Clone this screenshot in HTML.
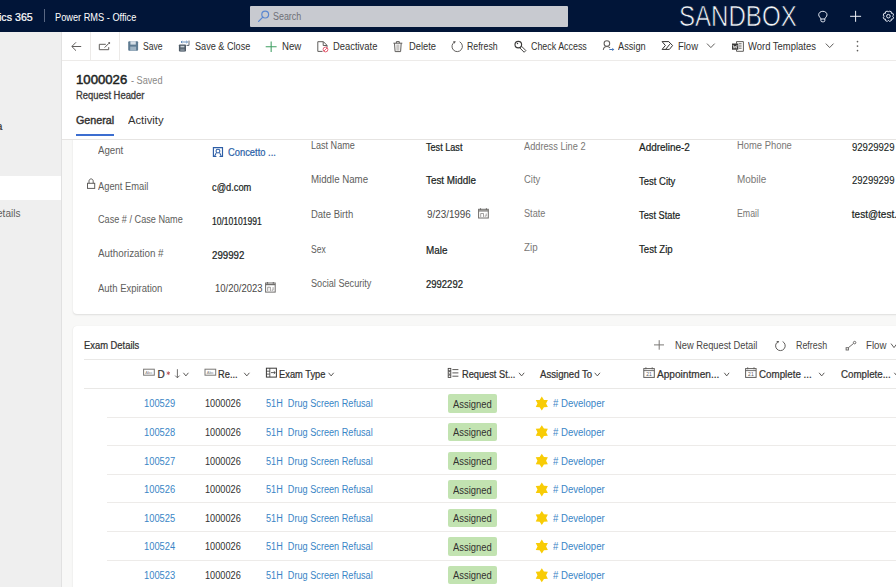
<!DOCTYPE html>
<html><head><meta charset="utf-8">
<style>
*{margin:0;padding:0;box-sizing:border-box}
html,body{width:896px;height:587px;overflow:hidden;background:#fff;font-family:"Liberation Sans",sans-serif;color:#323130}
.t{position:absolute;white-space:nowrap;line-height:normal}
.b{position:absolute}
svg.i{position:absolute;overflow:visible}
</style></head><body>
<!-- header -->
<div class="b" style="left:0;top:0;width:896px;height:32px;background:#011538"></div>
<div class="b" style="left:44px;top:9px;width:1px;height:13px;background:#5a6883"></div>
<div class="b" style="left:250px;top:6px;width:318px;height:21px;background:#c8cad0;border-radius:1px"></div>
<!-- sidebar -->
<div class="b" style="left:0;top:32px;width:61px;height:555px;background:#efefef"></div>
<div class="b" style="left:61px;top:32px;width:1px;height:555px;background:#e1e1e1"></div>
<div class="b" style="left:0;top:176px;width:61px;height:24px;background:#ffffff"></div>
<!-- page bg -->
<div class="b" style="left:62px;top:140px;width:834px;height:447px;background:#f8f8f7"></div>
<div class="b" style="left:73px;top:120px;width:840px;height:194px;background:#fff;border-radius:4px;box-shadow:0 0 1px rgba(0,0,0,.07),0 1px 2px rgba(0,0,0,.1)"></div>
<div class="b" style="left:73px;top:326px;width:840px;height:300px;background:#fff;border-radius:4px;box-shadow:0 0 1px rgba(0,0,0,.07),0 1px 2px rgba(0,0,0,.1)"></div>
<!-- command bar -->
<div class="b" style="left:62px;top:32px;width:834px;height:108px;background:#fff"></div>
<div class="b" style="left:90px;top:32px;width:1px;height:28px;background:#eceae8"></div>
<div class="b" style="left:119px;top:32px;width:1px;height:28px;background:#eceae8"></div>
<div class="b" style="left:62px;top:60px;width:834px;height:1px;background:#edebe9"></div>
<!-- tabs underline + border -->
<div class="b" style="left:76px;top:134px;width:38px;height:2px;background:#3c6ed0"></div>
<div class="b" style="left:62px;top:139px;width:834px;height:1px;background:#e6e4e2"></div>

<!-- grid lines -->
<div class="b" style="left:84px;top:359px;width:812px;height:1px;background:#e9e8e6"></div>
<div class="b" style="left:84px;top:388px;width:812px;height:1px;background:#e9e8e6"></div>
<div class="b" style="left:107px;top:416.6px;width:789px;height:1px;background:#edebe9"></div>
<div class="b" style="left:107px;top:445.2px;width:789px;height:1px;background:#edebe9"></div>
<div class="b" style="left:107px;top:473.8px;width:789px;height:1px;background:#edebe9"></div>
<div class="b" style="left:107px;top:502.4px;width:789px;height:1px;background:#edebe9"></div>
<div class="b" style="left:107px;top:531.0px;width:789px;height:1px;background:#edebe9"></div>
<div class="b" style="left:107px;top:559.6px;width:789px;height:1px;background:#edebe9"></div>
<div class="b" style="left:107px;top:588.2px;width:789px;height:1px;background:#edebe9"></div>

<div class="b" style="left:448px;top:394.3px;width:49px;height:18.5px;background:#c2e3b1;border-radius:2px"></div>
<div class="b" style="left:448px;top:422.9px;width:49px;height:18.5px;background:#c2e3b1;border-radius:2px"></div>
<div class="b" style="left:448px;top:451.5px;width:49px;height:18.5px;background:#c2e3b1;border-radius:2px"></div>
<div class="b" style="left:448px;top:480.1px;width:49px;height:18.5px;background:#c2e3b1;border-radius:2px"></div>
<div class="b" style="left:448px;top:508.7px;width:49px;height:18.5px;background:#c2e3b1;border-radius:2px"></div>
<div class="b" style="left:448px;top:537.3px;width:49px;height:18.5px;background:#c2e3b1;border-radius:2px"></div>
<div class="b" style="left:448px;top:565.9px;width:49px;height:18.5px;background:#c2e3b1;border-radius:2px"></div>

<svg class="i" style="left:0;top:0" width="896" height="587" viewBox="0 0 896 587">
<circle cx="265.2" cy="14.6" r="3.4" fill="none" stroke="#5a86d0" stroke-width="1.2"/>
<path d="M262.8 17.1 L258.6 21.4" stroke="#5a86d0" stroke-width="1.3" stroke-linecap="round"/>
<path d="M820.9 19.0 C820.9 17.8 818.7 16.8 818.7 14.8 C818.7 12.7 820.6 11.3 822.85 11.3 C825.1 11.3 827.0 12.7 827.0 14.8 C827.0 16.8 824.8 17.8 824.8 19.0 Z" fill="none" stroke="#e6ebf5" stroke-width="1"/>
<path d="M820.9 19.0 V20.6 C820.9 21.4 821.5 21.8 822.2 21.8 H823.5 C824.2 21.8 824.8 21.4 824.8 20.6 V19.0" fill="none" stroke="#e6ebf5" stroke-width="1"/>
<path d="M850.1 16.3 H861.1 M855.6 10.8 V21.8" stroke="#eef1f7" stroke-width="1"/>
<path d="M888.45 12.10 L889.41 11.00 L891.36 11.80 L891.26 13.26 L891.34 13.34 L892.80 13.24 L893.60 15.19 L892.50 16.15 L892.50 16.25 L893.60 17.21 L892.80 19.16 L891.34 19.06 L891.26 19.14 L891.36 20.60 L889.41 21.40 L888.45 20.30 L888.35 20.30 L887.39 21.40 L885.44 20.60 L885.54 19.14 L885.46 19.06 L884.00 19.16 L883.20 17.21 L884.30 16.25 L884.30 16.15 L883.20 15.19 L884.00 13.24 L885.46 13.34 L885.54 13.26 L885.44 11.80 L887.39 11.00 L888.35 12.10 Z" fill="none" stroke="#e6ebf5" stroke-width="1" stroke-linejoin="round"/>
<circle cx="888.4" cy="16.2" r="1.8" fill="none" stroke="#e6ebf5" stroke-width="1"/>
<path d="M81.2 46.5 H72 M76 42.3 L71.8 46.5 L76 50.7" fill="none" stroke="#605e5c" stroke-width="1"/>
<path d="M105.8 44.3 H99.3 V49.7 H108.7 V47.2 M104.6 47.6 L108.6 43.6" fill="none" stroke="#605e5c" stroke-width="1"/>
<circle cx="109.2" cy="43.0" r="1.0" fill="#605e5c"/>
<rect x="128.2" y="41.2" width="9.9" height="9.5" rx="1" fill="#5e7b92"/>
<rect x="130.4" y="41.2" width="5.4" height="3.4" fill="#d5dee6"/>
<rect x="130.2" y="46.6" width="5.9" height="4.1" fill="#9db2c2"/>
<rect x="178.9" y="44.5" width="7.1" height="7.1" rx="0.8" fill="#4e5a66"/>
<rect x="180.5" y="45.8" width="3.9" height="1.6" fill="#c9d1d8"/>
<rect x="180.3" y="48.6" width="4.3" height="3" fill="#7d8994"/>
<path d="M181 42 H187.5 M182.2 40.9 L181 42 L182.2 43.1 M186.3 40.9 L187.5 42 L186.3 43.1" fill="none" stroke="#5a86b8" stroke-width="0.9"/>
<path d="M189 40.6 V45.4 H186.5" fill="none" stroke="#4e5a66" stroke-width="0.9"/>
<path d="M265.7 46.8 H276.6 M271.15 41.6 V51.9" stroke="#3f9e62" stroke-width="1.05"/>
<path d="M322.5 51.4 H317.8 V41.7 H323.4 L327 45.3 V47.5" fill="none" stroke="#605e5c" stroke-width="1"/>
<path d="M323.2 41.7 V45.5 H327" fill="none" stroke="#605e5c" stroke-width="1"/>
<circle cx="325.5" cy="49.5" r="2.4" fill="#fff" stroke="#e0566a" stroke-width="0.95"/>
<path d="M323.9 51.1 L327.1 47.9" stroke="#e0566a" stroke-width="0.9"/>
<path d="M393.4 43.2 H402.3 M396.4 43.2 V41.6 H399.3 V43.2 M394.5 43.2 L395.1 51.6 H400.6 L401.2 43.2" fill="none" stroke="#605e5c" stroke-width="1"/>
<rect x="396.3" y="44.5" width="3.1" height="6.2" fill="#c8c6c4"/>
<path d="M459.64 41.81 A5.2 5.2 0 1 1 454.44 41.99" fill="none" stroke="#605e5c" stroke-width="1"/>
<path d="M455.80 41.14 L454.56 43.69 L452.97 41.14 Z" fill="#605e5c"/>
<circle cx="518.3" cy="44.6" r="3.3" fill="none" stroke="#3b3a39" stroke-width="1.15"/>
<circle cx="517.5" cy="43.5" r="0.75" fill="#3b3a39"/>
<path d="M519.75 47.85 L524.15 52.25 L525.85 50.55 L521.45 46.15" fill="none" stroke="#3b3a39" stroke-width="0.95" stroke-linejoin="round"/>
<circle cx="606.9" cy="43.5" r="2.8" fill="none" stroke="#605e5c" stroke-width="1.05"/>
<path d="M603.3 49.9 C603.5 47.6 605 46.5 606.9 46.5 C608.2 46.5 609.3 47.1 610 47.9" fill="none" stroke="#605e5c" stroke-width="1.05"/>
<path d="M609.4 49.5 H612.6" stroke="#3c6fb5" stroke-width="1"/>
<path d="M614.3 49.5 L612.2 48 V51 Z" fill="#3c6fb5"/>
<path d="M662.1 41.6 H668.6 L672.6 45.5 L669.4 49.4 H662.1 L665.4 45.5 Z" fill="none" stroke="#323130" stroke-width="1" stroke-linejoin="miter"/>
<path d="M665.6 49.4 L669.8 44.2 M668.6 41.6 L670.2 43.1" fill="none" stroke="#323130" stroke-width="1"/>
<path d="M707 43.6 L710.85 47.6 L714.7 43.6" fill="none" stroke="#605e5c" stroke-width="1"/>
<path d="M736.5 41.6 H743.4 V51.3 H736.5 V49.6 M736.5 43.7 V41.6 M738.8 43.8 H741.6 M738.8 46 H741.6 M738.8 48.2 H741.6" fill="none" stroke="#605e5c" stroke-width="1"/>
<rect x="732" y="43.5" width="6.3" height="6.2" fill="#3b3a39"/>
<path d="M733.1 45 L734 48.3 L735.1 46 L736.2 48.3 L737.1 45" fill="none" stroke="#fff" stroke-width="0.7"/>
<path d="M825.8 43.6 L829.65 47.6 L833.5 43.6" fill="none" stroke="#605e5c" stroke-width="1"/>
<circle cx="857.5" cy="41.6" r="0.85" fill="#605e5c"/>
<circle cx="857.5" cy="46.1" r="0.85" fill="#605e5c"/>
<circle cx="857.5" cy="50.6" r="0.85" fill="#605e5c"/>
<path d="M216.4 156.5 H213.4 V147.6 H222.5 V156.5 H219.5" fill="none" stroke="#2d5ea6" stroke-width="1.15"/>
<circle cx="217.95" cy="151.1" r="1.95" fill="none" stroke="#2d5ea6" stroke-width="1.05"/>
<path d="M214.6 156.3 L216.2 153.1 M221.3 156.3 L219.7 153.1" fill="none" stroke="#2d5ea6" stroke-width="1.05"/>
<path d="M89 183.2 V181.1 C89 179.8 90 178.9 91.1 178.9 C92.2 178.9 93.2 179.8 93.2 181.1 V183.2" fill="none" stroke="#605e5c" stroke-width="1"/>
<rect x="87.5" y="183.3" width="7.2" height="5.1" fill="none" stroke="#605e5c" stroke-width="1"/>
<rect x="265.6" y="283.0" width="9.599999999999966" height="9.100000000000023" fill="none" stroke="#6f6d6b" stroke-width="1"/>
<path d="M265.6 284.6 H275.2" stroke="#6f6d6b" stroke-width="1.2"/>
<path d="M267.5 282 V283.8 M273.3 282 V283.8" stroke="#6f6d6b" stroke-width="1.1"/>
<path d="M267.7 291.0 V287.2 H270.4 V291.0 M273.1 287.2 V290.20000000000005 H271.6" fill="none" stroke="#6f6d6b" stroke-width="0.8" opacity="0.8"/>
<rect x="478.6" y="209.3" width="9.699999999999989" height="8.699999999999989" fill="none" stroke="#6f6d6b" stroke-width="1"/>
<path d="M478.6 210.9 H488.3" stroke="#6f6d6b" stroke-width="1.2"/>
<path d="M480.5 208.3 V210.10000000000002 M486.4 208.3 V210.10000000000002" stroke="#6f6d6b" stroke-width="1.1"/>
<path d="M480.7 216.9 V213.5 H483.5 V216.9 M486.2 213.5 V216.1 H484.7" fill="none" stroke="#6f6d6b" stroke-width="0.8" opacity="0.8"/>
<path d="M654 344.9 H664 M659.2 340.2 V349.7" stroke="#7a7876" stroke-width="1"/>
<path d="M782.65 341.56 A4.8 4.8 0 1 1 777.86 341.73" fill="none" stroke="#605e5c" stroke-width="1"/>
<path d="M779.21 340.88 L777.97 343.43 L776.38 340.88 Z" fill="#605e5c"/>
<rect x="846.1" y="347.7" width="2.3" height="2.3" fill="none" stroke="#605e5c" stroke-width="0.9"/>
<path d="M848.4 347.7 L853.4 343.6" stroke="#605e5c" stroke-width="0.9"/>
<circle cx="854.6" cy="342.6" r="1.25" fill="none" stroke="#605e5c" stroke-width="0.9"/>
<path d="M891 343.6 L894.00 347.6 L897 343.6" fill="none" stroke="#605e5c" stroke-width="1"/>
<rect x="143.6" y="369.2" width="10.700000000000017" height="6.0" fill="none" stroke="#7a7876" stroke-width="1"/>
<text x="148.9" y="373.9" font-size="4.2" text-anchor="middle" fill="#8a8886" font-family="Liberation Sans">Abc</text>
<rect x="205.0" y="369.2" width="10.699999999999989" height="6.0" fill="none" stroke="#7a7876" stroke-width="1"/>
<text x="210.3" y="373.9" font-size="4.2" text-anchor="middle" fill="#8a8886" font-family="Liberation Sans">Abc</text>
<path d="M168.3 371.3 V375.1 M166.65 372.25 L169.95 374.15 M169.95 372.25 L166.65 374.15" stroke="#b0434a" stroke-width="0.75"/>
<path d="M177.4 369.2 V377.8 M175.2 375.6 L177.4 377.8 L179.6 375.6" fill="none" stroke="#605e5c" stroke-width="0.9"/>
<path d="M183.4 372.8 L185.90 375.9 L188.4 372.8" fill="none" stroke="#484644" stroke-width="0.9"/>
<path d="M244.2 372.8 L246.80 375.9 L249.4 372.8" fill="none" stroke="#484644" stroke-width="0.9"/>
<path d="M328.6 372.8 L331.15 375.9 L333.7 372.8" fill="none" stroke="#484644" stroke-width="0.9"/>
<path d="M519 372.8 L521.60 375.9 L524.2 372.8" fill="none" stroke="#484644" stroke-width="0.9"/>
<path d="M594.7 372.8 L597.35 375.9 L600 372.8" fill="none" stroke="#484644" stroke-width="0.9"/>
<path d="M724.3 372.8 L726.70 375.9 L729.1 372.8" fill="none" stroke="#484644" stroke-width="0.9"/>
<path d="M819.1 372.8 L821.70 375.9 L824.3 372.8" fill="none" stroke="#484644" stroke-width="0.9"/>
<path d="M894.3 372.8 L896.90 375.9 L899.5 372.8" fill="none" stroke="#484644" stroke-width="0.9"/>
<rect x="266.4" y="368.2" width="10" height="8.9" fill="none" stroke="#3b3a39" stroke-width="1"/>
<path d="M269.8 368.2 V377.1 M266.4 371.2 H269.8 M266.4 374.1 H269.8 M271 372.6 H275.2 M273.8 371.3 L275.3 372.6 L273.8 373.9" fill="none" stroke="#3b3a39" stroke-width="0.8"/>
<rect x="448.2" y="368.4" width="2.6" height="2.4" fill="none" stroke="#484644" stroke-width="0.9"/>
<path d="M452.4 369.6 H458.4" stroke="#484644" stroke-width="0.9"/>
<rect x="448.2" y="371.7" width="2.6" height="2.4" fill="none" stroke="#484644" stroke-width="0.9"/>
<path d="M452.4 372.9 H458.4" stroke="#484644" stroke-width="0.9"/>
<rect x="448.2" y="375.0" width="2.6" height="2.4" fill="none" stroke="#484644" stroke-width="0.9"/>
<path d="M452.4 376.2 H458.4" stroke="#484644" stroke-width="0.9"/>
<rect x="643.8" y="368.6" width="10.5" height="8.799999999999965" fill="none" stroke="#605e5c" stroke-width="1"/>
<path d="M643.8 370.6 H654.3" stroke="#605e5c" stroke-width="0.9"/>
<path d="M645.9 367.3 V369.3 M652.2 367.3 V369.3" stroke="#605e5c" stroke-width="0.9"/>
<text x="649.0" y="376.3" font-size="5" text-anchor="middle" fill="#605e5c" font-family="Liberation Sans">21</text>
<rect x="745.6" y="368.6" width="10.5" height="8.799999999999965" fill="none" stroke="#605e5c" stroke-width="1"/>
<path d="M745.6 370.6 H756.1" stroke="#605e5c" stroke-width="0.9"/>
<path d="M747.7 367.3 V369.3 M754.0 367.3 V369.3" stroke="#605e5c" stroke-width="0.9"/>
<text x="750.9" y="376.3" font-size="5" text-anchor="middle" fill="#605e5c" font-family="Liberation Sans">21</text>
<path d="M541.80 396.60 L543.95 399.88 L547.86 400.10 L546.10 403.60 L547.86 407.10 L543.95 407.32 L541.80 410.60 L539.65 407.32 L535.74 407.10 L537.50 403.60 L535.74 400.10 L539.65 399.88 Z" fill="#f8cc06"/>
<path d="M541.80 425.20 L543.95 428.48 L547.86 428.70 L546.10 432.20 L547.86 435.70 L543.95 435.92 L541.80 439.20 L539.65 435.92 L535.74 435.70 L537.50 432.20 L535.74 428.70 L539.65 428.48 Z" fill="#f8cc06"/>
<path d="M541.80 453.80 L543.95 457.08 L547.86 457.30 L546.10 460.80 L547.86 464.30 L543.95 464.52 L541.80 467.80 L539.65 464.52 L535.74 464.30 L537.50 460.80 L535.74 457.30 L539.65 457.08 Z" fill="#f8cc06"/>
<path d="M541.80 482.40 L543.95 485.68 L547.86 485.90 L546.10 489.40 L547.86 492.90 L543.95 493.12 L541.80 496.40 L539.65 493.12 L535.74 492.90 L537.50 489.40 L535.74 485.90 L539.65 485.68 Z" fill="#f8cc06"/>
<path d="M541.80 511.00 L543.95 514.28 L547.86 514.50 L546.10 518.00 L547.86 521.50 L543.95 521.72 L541.80 525.00 L539.65 521.72 L535.74 521.50 L537.50 518.00 L535.74 514.50 L539.65 514.28 Z" fill="#f8cc06"/>
<path d="M541.80 539.60 L543.95 542.88 L547.86 543.10 L546.10 546.60 L547.86 550.10 L543.95 550.32 L541.80 553.60 L539.65 550.32 L535.74 550.10 L537.50 546.60 L535.74 543.10 L539.65 542.88 Z" fill="#f8cc06"/>
<path d="M541.80 568.20 L543.95 571.48 L547.86 571.70 L546.10 575.20 L547.86 578.70 L543.95 578.92 L541.80 582.20 L539.65 578.92 L535.74 578.70 L537.50 575.20 L535.74 571.70 L539.65 571.48 Z" fill="#f8cc06"/>
</svg>

<div class="t" style="left:-0.73px;top:11.20px;font-size:10.67px;font-weight:normal;color:#ffffff;transform:scaleX(0.9994);transform-origin:0 0;-webkit-text-stroke:0.22px #ffffff;">ics 365</div>
<div class="t" style="left:55.37px;top:11.10px;font-size:10.67px;font-weight:normal;color:#ffffff;transform:scaleX(0.8657);transform-origin:0 0;">Power RMS - Office</div>
<div class="t" style="left:273.20px;top:11.00px;font-size:10px;font-weight:normal;color:#6e7077;transform:scaleX(0.8907);transform-origin:0 0;">Search</div>
<div class="t" style="left:678.84px;top:0.20px;font-size:29px;font-weight:normal;color:#f4f6fa;transform:scaleX(0.8298);transform-origin:0 0;-webkit-text-stroke:0.7px #011538;">SANDBOX</div>
<div class="t" style="left:143.30px;top:40.70px;font-size:10px;font-weight:normal;color:#323130;transform:scaleX(0.8599);transform-origin:0 0;">Save</div>
<div class="t" style="left:194.60px;top:40.70px;font-size:10px;font-weight:normal;color:#323130;transform:scaleX(0.9133);transform-origin:0 0;">Save &amp; Close</div>
<div class="t" style="left:281.80px;top:40.70px;font-size:10px;font-weight:normal;color:#323130;transform:scaleX(0.9630);transform-origin:0 0;">New</div>
<div class="t" style="left:332.60px;top:40.70px;font-size:10px;font-weight:normal;color:#323130;transform:scaleX(0.9388);transform-origin:0 0;">Deactivate</div>
<div class="t" style="left:408.60px;top:40.70px;font-size:10px;font-weight:normal;color:#323130;transform:scaleX(0.9360);transform-origin:0 0;">Delete</div>
<div class="t" style="left:467.40px;top:40.70px;font-size:10px;font-weight:normal;color:#323130;transform:scaleX(0.8742);transform-origin:0 0;">Refresh</div>
<div class="t" style="left:530.60px;top:40.70px;font-size:10px;font-weight:normal;color:#323130;transform:scaleX(0.8887);transform-origin:0 0;">Check Access</div>
<div class="t" style="left:618.40px;top:40.70px;font-size:10px;font-weight:normal;color:#323130;transform:scaleX(0.9210);transform-origin:0 0;">Assign</div>
<div class="t" style="left:677.80px;top:40.70px;font-size:10px;font-weight:normal;color:#323130;transform:scaleX(0.9449);transform-origin:0 0;">Flow</div>
<div class="t" style="left:747.90px;top:40.70px;font-size:10px;font-weight:normal;color:#323130;transform:scaleX(0.9453);transform-origin:0 0;">Word Templates</div>
<div class="t" style="left:75.57px;top:72.00px;font-size:13.33px;font-weight:normal;color:#201f1e;transform:scaleX(0.9871);transform-origin:0 0;-webkit-text-stroke:0.22px #201f1e;-webkit-text-stroke:0.5px #201f1e;">1000026</div>
<div class="t" style="left:130.60px;top:75.30px;font-size:10px;font-weight:normal;color:#8a8886;transform:scaleX(0.9150);transform-origin:0 0;">- Saved</div>
<div class="t" style="left:75.70px;top:89.55px;font-size:10px;font-weight:normal;color:#3b3a39;transform:scaleX(0.9400);transform-origin:0 0;-webkit-text-stroke:0.22px #3b3a39;-webkit-text-stroke:0.3px #3b3a39;">Request Header</div>
<div class="t" style="left:75.97px;top:113.80px;font-size:10.67px;font-weight:normal;color:#323130;transform:scaleX(1.0087);transform-origin:0 0;-webkit-text-stroke:0.22px #323130;-webkit-text-stroke:0.4px #323130;">General</div>
<div class="t" style="left:127.87px;top:113.80px;font-size:10.67px;font-weight:normal;color:#323130;transform:scaleX(1.0544);transform-origin:0 0;">Activity</div>
<div class="t" style="left:97.90px;top:145.30px;font-size:10px;font-weight:normal;color:#605e5c;transform:scaleX(0.9670);transform-origin:0 0;">Agent</div>
<div class="t" style="left:97.90px;top:180.50px;font-size:10px;font-weight:normal;color:#605e5c;transform:scaleX(0.9338);transform-origin:0 0;">Agent Email</div>
<div class="t" style="left:97.90px;top:214.20px;font-size:10px;font-weight:normal;color:#605e5c;transform:scaleX(0.9129);transform-origin:0 0;">Case # / Case Name</div>
<div class="t" style="left:97.90px;top:248.20px;font-size:10px;font-weight:normal;color:#605e5c;transform:scaleX(0.9831);transform-origin:0 0;">Authorization #</div>
<div class="t" style="left:97.90px;top:282.90px;font-size:10px;font-weight:normal;color:#605e5c;transform:scaleX(0.9489);transform-origin:0 0;">Auth Expiration</div>
<div class="t" style="left:227.60px;top:147.20px;font-size:10px;font-weight:normal;color:#2a5fa8;transform:scaleX(0.9358);transform-origin:0 0;-webkit-text-stroke:0.22px #2a5fa8;">Concetto ...</div>
<div class="t" style="left:212.00px;top:182.40px;font-size:10px;font-weight:normal;color:#201f1e;transform:scaleX(0.9259);transform-origin:0 0;-webkit-text-stroke:0.22px #201f1e;">c@d.com</div>
<div class="t" style="left:212.00px;top:216.10px;font-size:10px;font-weight:normal;color:#201f1e;transform:scaleX(0.8526);transform-origin:0 0;-webkit-text-stroke:0.22px #201f1e;">10/10101991</div>
<div class="t" style="left:212.00px;top:250.10px;font-size:10px;font-weight:normal;color:#201f1e;transform:scaleX(0.9671);transform-origin:0 0;-webkit-text-stroke:0.22px #201f1e;">299992</div>
<div class="t" style="left:214.80px;top:283.40px;font-size:10px;font-weight:normal;color:#4a4846;transform:scaleX(0.9501);transform-origin:0 0;">10/20/2023</div>
<div class="t" style="left:311.20px;top:140.30px;font-size:10px;font-weight:normal;color:#605e5c;transform:scaleX(0.9043);transform-origin:0 0;">Last Name</div>
<div class="t" style="left:311.20px;top:173.80px;font-size:10px;font-weight:normal;color:#605e5c;transform:scaleX(0.9687);transform-origin:0 0;">Middle Name</div>
<div class="t" style="left:311.20px;top:208.80px;font-size:10px;font-weight:normal;color:#605e5c;transform:scaleX(0.9482);transform-origin:0 0;">Date Birth</div>
<div class="t" style="left:311.20px;top:243.80px;font-size:10px;font-weight:normal;color:#605e5c;transform:scaleX(0.8528);transform-origin:0 0;">Sex</div>
<div class="t" style="left:311.20px;top:277.80px;font-size:10px;font-weight:normal;color:#605e5c;transform:scaleX(0.9138);transform-origin:0 0;">Social Security</div>
<div class="t" style="left:425.60px;top:141.80px;font-size:10px;font-weight:normal;color:#201f1e;transform:scaleX(0.9102);transform-origin:0 0;-webkit-text-stroke:0.22px #201f1e;">Test Last</div>
<div class="t" style="left:425.60px;top:175.40px;font-size:10px;font-weight:normal;color:#201f1e;transform:scaleX(0.9864);transform-origin:0 0;-webkit-text-stroke:0.22px #201f1e;">Test Middle</div>
<div class="t" style="left:425.60px;top:245.40px;font-size:10px;font-weight:normal;color:#201f1e;transform:scaleX(0.9863);transform-origin:0 0;-webkit-text-stroke:0.22px #201f1e;">Male</div>
<div class="t" style="left:425.60px;top:278.80px;font-size:10px;font-weight:normal;color:#201f1e;transform:scaleX(0.9493);transform-origin:0 0;-webkit-text-stroke:0.22px #201f1e;">2992292</div>
<div class="t" style="left:427.30px;top:209.00px;font-size:10px;font-weight:normal;color:#4a4846;transform:scaleX(0.9840);transform-origin:0 0;">9/23/1996</div>
<div class="t" style="left:524.00px;top:140.80px;font-size:10px;font-weight:normal;color:#797775;transform:scaleX(0.9225);transform-origin:0 0;">Address Line 2</div>
<div class="t" style="left:524.00px;top:173.80px;font-size:10px;font-weight:normal;color:#797775;transform:scaleX(0.9435);transform-origin:0 0;">City</div>
<div class="t" style="left:524.00px;top:208.40px;font-size:10px;font-weight:normal;color:#797775;transform:scaleX(0.9135);transform-origin:0 0;">State</div>
<div class="t" style="left:524.00px;top:242.00px;font-size:10px;font-weight:normal;color:#797775;transform:scaleX(0.9768);transform-origin:0 0;">Zip</div>
<div class="t" style="left:638.50px;top:142.10px;font-size:10px;font-weight:normal;color:#201f1e;transform:scaleX(0.9949);transform-origin:0 0;-webkit-text-stroke:0.22px #201f1e;">Addreline-2</div>
<div class="t" style="left:638.50px;top:176.00px;font-size:10px;font-weight:normal;color:#201f1e;transform:scaleX(0.9484);transform-origin:0 0;-webkit-text-stroke:0.22px #201f1e;">Test City</div>
<div class="t" style="left:638.50px;top:210.00px;font-size:10px;font-weight:normal;color:#201f1e;transform:scaleX(0.9276);transform-origin:0 0;-webkit-text-stroke:0.22px #201f1e;">Test State</div>
<div class="t" style="left:638.50px;top:243.60px;font-size:10px;font-weight:normal;color:#201f1e;transform:scaleX(0.9617);transform-origin:0 0;-webkit-text-stroke:0.22px #201f1e;">Test Zip</div>
<div class="t" style="left:737.40px;top:140.00px;font-size:10px;font-weight:normal;color:#797775;transform:scaleX(0.9397);transform-origin:0 0;">Home Phone</div>
<div class="t" style="left:737.40px;top:173.80px;font-size:10px;font-weight:normal;color:#797775;transform:scaleX(0.9941);transform-origin:0 0;">Mobile</div>
<div class="t" style="left:737.40px;top:207.80px;font-size:10px;font-weight:normal;color:#797775;transform:scaleX(0.8801);transform-origin:0 0;">Email</div>
<div class="t" style="left:851.80px;top:141.90px;font-size:10px;font-weight:normal;color:#201f1e;transform:scaleX(0.9543);transform-origin:0 0;-webkit-text-stroke:0.1px #201f1e;">92929929</div>
<div class="t" style="left:851.80px;top:175.10px;font-size:10px;font-weight:normal;color:#201f1e;transform:scaleX(0.9543);transform-origin:0 0;-webkit-text-stroke:0.1px #201f1e;">29299299</div>
<div class="t" style="left:851.80px;top:209.30px;font-size:10px;font-weight:normal;color:#201f1e;-webkit-text-stroke:0.22px #201f1e;">test@test.com</div>
<div class="t" style="left:83.70px;top:340.20px;font-size:10px;font-weight:normal;color:#323130;transform:scaleX(0.9380);transform-origin:0 0;-webkit-text-stroke:0.22px #323130;">Exam Details</div>
<div class="t" style="left:674.50px;top:340.10px;font-size:10px;font-weight:normal;color:#484644;transform:scaleX(0.9319);transform-origin:0 0;">New Request Detail</div>
<div class="t" style="left:796.20px;top:340.10px;font-size:10px;font-weight:normal;color:#484644;transform:scaleX(0.8888);transform-origin:0 0;">Refresh</div>
<div class="t" style="left:866.20px;top:340.10px;font-size:10px;font-weight:normal;color:#484644;transform:scaleX(0.9645);transform-origin:0 0;">Flow</div>
<div class="t" style="left:157.60px;top:369.30px;font-size:10px;font-weight:normal;color:#323130;-webkit-text-stroke:0.22px #323130;">D</div>
<div class="t" style="left:218.20px;top:369.30px;font-size:10px;font-weight:normal;color:#323130;transform:scaleX(0.9302);transform-origin:0 0;-webkit-text-stroke:0.22px #323130;">Re...</div>
<div class="t" style="left:279.40px;top:369.30px;font-size:10px;font-weight:normal;color:#323130;transform:scaleX(0.9320);transform-origin:0 0;-webkit-text-stroke:0.22px #323130;">Exam Type</div>
<div class="t" style="left:461.70px;top:369.30px;font-size:10px;font-weight:normal;color:#323130;transform:scaleX(0.9245);transform-origin:0 0;-webkit-text-stroke:0.22px #323130;">Request St...</div>
<div class="t" style="left:540.30px;top:369.30px;font-size:10px;font-weight:normal;color:#323130;transform:scaleX(0.9609);transform-origin:0 0;-webkit-text-stroke:0.22px #323130;">Assigned To</div>
<div class="t" style="left:657.30px;top:369.30px;font-size:10px;font-weight:normal;color:#323130;transform:scaleX(1.0112);transform-origin:0 0;-webkit-text-stroke:0.22px #323130;">Appointmen...</div>
<div class="t" style="left:759.00px;top:369.30px;font-size:10px;font-weight:normal;color:#323130;transform:scaleX(0.9770);transform-origin:0 0;-webkit-text-stroke:0.22px #323130;">Complete ...</div>
<div class="t" style="left:840.50px;top:369.30px;font-size:10px;font-weight:normal;color:#323130;transform:scaleX(0.9734);transform-origin:0 0;-webkit-text-stroke:0.22px #323130;">Complete...</div>
<div class="t" style="left:143.50px;top:398.30px;font-size:10px;font-weight:normal;color:#3a85c6;transform:scaleX(0.9334);transform-origin:0 0;">100529</div>
<div class="t" style="left:205.20px;top:398.30px;font-size:10px;font-weight:normal;color:#323130;transform:scaleX(0.9179);transform-origin:0 0;">1000026</div>
<div class="t" style="left:265.80px;top:398.30px;font-size:10px;font-weight:normal;color:#3a85c6;transform:scaleX(0.9144);transform-origin:0 0;white-space:pre;">51H  Drug Screen Refusal</div>
<div class="t" style="left:453.10px;top:398.80px;font-size:10px;font-weight:normal;color:#323130;transform:scaleX(0.9421);transform-origin:0 0;">Assigned</div>
<div class="t" style="left:552.60px;top:398.30px;font-size:10px;font-weight:normal;color:#3a85c6;transform:scaleX(0.9583);transform-origin:0 0;"># Developer</div>
<div class="t" style="left:143.50px;top:426.90px;font-size:10px;font-weight:normal;color:#3a85c6;transform:scaleX(0.9334);transform-origin:0 0;">100528</div>
<div class="t" style="left:205.20px;top:426.90px;font-size:10px;font-weight:normal;color:#323130;transform:scaleX(0.9179);transform-origin:0 0;">1000026</div>
<div class="t" style="left:265.80px;top:426.90px;font-size:10px;font-weight:normal;color:#3a85c6;transform:scaleX(0.9144);transform-origin:0 0;white-space:pre;">51H  Drug Screen Refusal</div>
<div class="t" style="left:453.10px;top:427.40px;font-size:10px;font-weight:normal;color:#323130;transform:scaleX(0.9421);transform-origin:0 0;">Assigned</div>
<div class="t" style="left:552.60px;top:426.90px;font-size:10px;font-weight:normal;color:#3a85c6;transform:scaleX(0.9583);transform-origin:0 0;"># Developer</div>
<div class="t" style="left:143.50px;top:455.50px;font-size:10px;font-weight:normal;color:#3a85c6;transform:scaleX(0.9334);transform-origin:0 0;">100527</div>
<div class="t" style="left:205.20px;top:455.50px;font-size:10px;font-weight:normal;color:#323130;transform:scaleX(0.9179);transform-origin:0 0;">1000026</div>
<div class="t" style="left:265.80px;top:455.50px;font-size:10px;font-weight:normal;color:#3a85c6;transform:scaleX(0.9144);transform-origin:0 0;white-space:pre;">51H  Drug Screen Refusal</div>
<div class="t" style="left:453.10px;top:456.00px;font-size:10px;font-weight:normal;color:#323130;transform:scaleX(0.9421);transform-origin:0 0;">Assigned</div>
<div class="t" style="left:552.60px;top:455.50px;font-size:10px;font-weight:normal;color:#3a85c6;transform:scaleX(0.9583);transform-origin:0 0;"># Developer</div>
<div class="t" style="left:143.50px;top:484.10px;font-size:10px;font-weight:normal;color:#3a85c6;transform:scaleX(0.9334);transform-origin:0 0;">100526</div>
<div class="t" style="left:205.20px;top:484.10px;font-size:10px;font-weight:normal;color:#323130;transform:scaleX(0.9179);transform-origin:0 0;">1000026</div>
<div class="t" style="left:265.80px;top:484.10px;font-size:10px;font-weight:normal;color:#3a85c6;transform:scaleX(0.9144);transform-origin:0 0;white-space:pre;">51H  Drug Screen Refusal</div>
<div class="t" style="left:453.10px;top:484.60px;font-size:10px;font-weight:normal;color:#323130;transform:scaleX(0.9421);transform-origin:0 0;">Assigned</div>
<div class="t" style="left:552.60px;top:484.10px;font-size:10px;font-weight:normal;color:#3a85c6;transform:scaleX(0.9583);transform-origin:0 0;"># Developer</div>
<div class="t" style="left:143.50px;top:512.70px;font-size:10px;font-weight:normal;color:#3a85c6;transform:scaleX(0.9334);transform-origin:0 0;">100525</div>
<div class="t" style="left:205.20px;top:512.70px;font-size:10px;font-weight:normal;color:#323130;transform:scaleX(0.9179);transform-origin:0 0;">1000026</div>
<div class="t" style="left:265.80px;top:512.70px;font-size:10px;font-weight:normal;color:#3a85c6;transform:scaleX(0.9144);transform-origin:0 0;white-space:pre;">51H  Drug Screen Refusal</div>
<div class="t" style="left:453.10px;top:513.20px;font-size:10px;font-weight:normal;color:#323130;transform:scaleX(0.9421);transform-origin:0 0;">Assigned</div>
<div class="t" style="left:552.60px;top:512.70px;font-size:10px;font-weight:normal;color:#3a85c6;transform:scaleX(0.9583);transform-origin:0 0;"># Developer</div>
<div class="t" style="left:143.50px;top:541.30px;font-size:10px;font-weight:normal;color:#3a85c6;transform:scaleX(0.9334);transform-origin:0 0;">100524</div>
<div class="t" style="left:205.20px;top:541.30px;font-size:10px;font-weight:normal;color:#323130;transform:scaleX(0.9179);transform-origin:0 0;">1000026</div>
<div class="t" style="left:265.80px;top:541.30px;font-size:10px;font-weight:normal;color:#3a85c6;transform:scaleX(0.9144);transform-origin:0 0;white-space:pre;">51H  Drug Screen Refusal</div>
<div class="t" style="left:453.10px;top:541.80px;font-size:10px;font-weight:normal;color:#323130;transform:scaleX(0.9421);transform-origin:0 0;">Assigned</div>
<div class="t" style="left:552.60px;top:541.30px;font-size:10px;font-weight:normal;color:#3a85c6;transform:scaleX(0.9583);transform-origin:0 0;"># Developer</div>
<div class="t" style="left:143.50px;top:569.90px;font-size:10px;font-weight:normal;color:#3a85c6;transform:scaleX(0.9334);transform-origin:0 0;">100523</div>
<div class="t" style="left:205.20px;top:569.90px;font-size:10px;font-weight:normal;color:#323130;transform:scaleX(0.9179);transform-origin:0 0;">1000026</div>
<div class="t" style="left:265.80px;top:569.90px;font-size:10px;font-weight:normal;color:#3a85c6;transform:scaleX(0.9144);transform-origin:0 0;white-space:pre;">51H  Drug Screen Refusal</div>
<div class="t" style="left:453.10px;top:570.40px;font-size:10px;font-weight:normal;color:#323130;transform:scaleX(0.9421);transform-origin:0 0;">Assigned</div>
<div class="t" style="left:552.60px;top:569.90px;font-size:10px;font-weight:normal;color:#3a85c6;transform:scaleX(0.9583);transform-origin:0 0;"># Developer</div>
<div class="t" style="top:207.50px;font-size:10px;font-weight:normal;color:#605e5c;right:875.6px;">etails</div>
<div class="t" style="top:120.70px;font-size:10px;font-weight:normal;color:#323130;-webkit-text-stroke:0.22px #323130;right:893.8px;">a</div>
</body></html>
